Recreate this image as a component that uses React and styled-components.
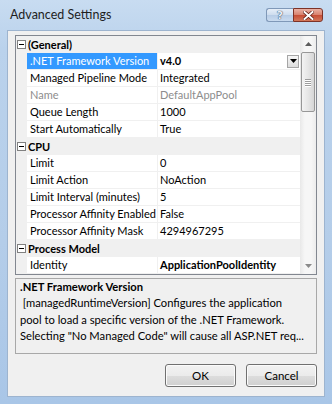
import React from 'react'
import styled, { createGlobalStyle } from 'styled-components'

const sections = [
  {
    name: '(General)',
    rows: [
      { label: '.NET Framework Version', value: 'v4.0', bold: true, selected: true, dropdown: true },
      { label: 'Managed Pipeline Mode', value: 'Integrated' },
      { label: 'Name', value: 'DefaultAppPool', disabled: true },
      { label: 'Queue Length', value: '1000' },
      { label: 'Start Automatically', value: 'True' },
    ],
  },
  {
    name: 'CPU',
    rows: [
      { label: 'Limit', value: '0' },
      { label: 'Limit Action', value: 'NoAction' },
      { label: 'Limit Interval (minutes)', value: '5' },
      { label: 'Processor Affinity Enabled', value: 'False' },
      { label: 'Processor Affinity Mask', value: '4294967295' },
    ],
  },
  {
    name: 'Process Model',
    rows: [{ label: 'Identity', value: 'ApplicationPoolIdentity', bold: true }],
  },
]

const descLines = [
  ' [managedRuntimeVersion] Configures the application',
  'pool to load a specific version of the .NET Framework.',
  'Selecting "No Managed Code" will cause all ASP.NET req...',
]

const App = () => {
  return (
    <>
      <GlobalStyle />
      <Window>
        <TitleBar>
          <Title>Advanced Settings</Title>
          <Caption>
            <HelpButton>?</HelpButton>
            <CloseButton>
              <svg width="11" height="9" viewBox="0 0 11 9">
                <path d="M1.5 1 L9.5 8 M9.5 1 L1.5 8" stroke="#5a1a12" strokeWidth="3.4" strokeLinecap="square" />
                <path d="M1.5 1 L9.5 8 M9.5 1 L1.5 8" stroke="#fff" strokeWidth="2" strokeLinecap="square" />
              </svg>
            </CloseButton>
          </Caption>
        </TitleBar>
        <Client>
          <Grid>
            <Rows>
              {sections.map((s) => (
                <React.Fragment key={s.name}>
                  <Category>
                    <Gutter>
                      <Toggle />
                    </Gutter>
                    <CategoryName>{s.name}</CategoryName>
                  </Category>
                  {s.rows.map((r) => (
                    <Row key={r.label}>
                      <Gutter />
                      <Label $selected={r.selected} $disabled={r.disabled}>
                        {r.label}
                      </Label>
                      <Value $bold={r.bold} $disabled={r.disabled}>
                        <span>{r.value}</span>
                        {r.dropdown && (
                          <DropButton>
                            <svg width="7" height="4" viewBox="0 0 7 4">
                              <path d="M0 0 H7 L3.5 4 Z" fill="#000" />
                            </svg>
                          </DropButton>
                        )}
                      </Value>
                    </Row>
                  ))}
                </React.Fragment>
              ))}
            </Rows>
            <ScrollBar>
              <Arrow>
                <svg width="7" height="4" viewBox="0 0 7 4">
                  <path d="M0 4 H7 L3.5 0 Z" fill="#5c5c5c" />
                </svg>
              </Arrow>
              <Thumb>
                <Grip />
                <Grip />
                <Grip />
                <Grip />
              </Thumb>
              <Track />
              <Arrow>
                <svg width="7" height="4" viewBox="0 0 7 4">
                  <path d="M0 0 H7 L3.5 4 Z" fill="#8a8a8a" />
                </svg>
              </Arrow>
            </ScrollBar>
          </Grid>
          <Description>
            <DescTitle>.NET Framework Version</DescTitle>
            {descLines.map((l) => (
              <DescLine key={l}>{l}</DescLine>
            ))}
          </Description>
          <Buttons>
            <Button>OK</Button>
            <Button>Cancel</Button>
          </Buttons>
        </Client>
      </Window>
    </>
  )
}

const GlobalStyle = createGlobalStyle`
  html, body {
    margin: 0;
    padding: 0;
  }
  body {
    background: #bcd3ed;
    font-family: Lato, "Liberation Sans", sans-serif;
    color: #000;
  }
`

const Window = styled.div`
  width: 332px;
  height: 404px;
  box-sizing: border-box;
  padding: 0 7px 7px 7px;
  display: flex;
  flex-direction: column;
  background: linear-gradient(180deg, #c8dcf1 0%, #bad2ec 12%, #b4cde9 60%, #a9c6e7 100%);
`

const TitleBar = styled.div`
  height: 30px;
  display: flex;
  justify-content: space-between;
  align-items: flex-start;
`

const Title = styled.div`
  padding: 7px 0 0 3px;
  font-size: 12.5px;
  line-height: 16px;
  color: #1e1e1e;
`

const Caption = styled.div`
  display: flex;
  margin: 8px 2px 0 0;
`

const HelpButton = styled.div`
  width: 27px;
  height: 14px;
  box-sizing: border-box;
  border: 1px solid #7f98b8;
  border-right: none;
  border-radius: 3px 0 0 3px;
  background: linear-gradient(180deg, #e6eef8 0%, #cddcee 50%, #b7cce6 51%, #c9dbef 100%);
  display: flex;
  justify-content: center;
  align-items: center;
  font-family: "DejaVu Sans", sans-serif;
  font-weight: bold;
  font-size: 11px;
  color: #e8eef6;
  text-shadow: 0 0 1px #2c4460, 0 0 1px #2c4460;
`

const CloseButton = styled.div`
  width: 30px;
  height: 14px;
  box-sizing: border-box;
  border: 1px solid #7d3227;
  border-radius: 0 3px 3px 0;
  background: linear-gradient(180deg, #eab1a4 0%, #d9836f 48%, #c74d35 52%, #d2775a 100%);
  display: flex;
  justify-content: center;
  align-items: center;
`

const Client = styled.div`
  flex: 1;
  box-sizing: border-box;
  background: #f0f0f0;
  border: 1px solid #9db4cf;
  padding: 4px 7px 0 7px;
  display: flex;
  flex-direction: column;
`

const Grid = styled.div`
  height: 240px;
  box-sizing: border-box;
  border: 1px solid #828790;
  background: #fff;
  display: flex;
  overflow: hidden;
`

const Rows = styled.div`
  flex: 1;
  display: flex;
  flex-direction: column;
  font-size: 11px;
`

const Row = styled.div`
  display: flex;
  height: 17px;
  flex-shrink: 0;
`

const Category = styled(Row)`
  background: #f0f0f0;
  font-weight: bold;
  align-items: center;
`

const Gutter = styled.div`
  width: 11px;
  flex-shrink: 0;
  height: 17px;
  background: #f0f0f0;
  display: flex;
  align-items: center;
  justify-content: flex-end;
`

const Toggle = styled.div`
  position: relative;
  width: 9px;
  height: 9px;
  box-sizing: border-box;
  border: 1px solid #808080;
  background: #fff;
  margin-right: 1px;
  &::after {
    content: '';
    position: absolute;
    left: 1px;
    right: 1px;
    top: 3px;
    height: 1px;
    background: #000;
  }
`

const CategoryName = styled.div`
  padding-left: 1px;
  line-height: 17px;
`

const Label = styled.div`
  width: 131px;
  flex-shrink: 0;
  box-sizing: border-box;
  height: 17px;
  padding-left: 3px;
  line-height: 16px;
  white-space: nowrap;
  overflow: hidden;
  border-bottom: 1px solid #f0f0f0;
  border-right: 1px solid #f0f0f0;
  background: ${(p) => (p.$selected ? '#3399ff' : '#fff')};
  color: ${(p) => (p.$selected ? '#fff' : p.$disabled ? '#8d8d8d' : '#000')};
`

const Value = styled.div`
  flex: 1;
  min-width: 0;
  box-sizing: border-box;
  height: 17px;
  padding: 0 1px 0 2px;
  line-height: 16px;
  border-bottom: 1px solid #f0f0f0;
  display: flex;
  align-items: center;
  justify-content: space-between;
  white-space: nowrap;
  font-weight: ${(p) => (p.$bold ? 'bold' : 'normal')};
  color: ${(p) => (p.$disabled ? '#8d8d8d' : '#000')};
`

const DropButton = styled.div`
  width: 12px;
  height: 13px;
  box-sizing: border-box;
  border: 1px solid #a5a5a5;
  background: linear-gradient(180deg, #f7f7f7, #dcdcdc);
  display: flex;
  align-items: center;
  justify-content: center;
`

const ScrollBar = styled.div`
  width: 16px;
  flex-shrink: 0;
  display: flex;
  flex-direction: column;
  background: linear-gradient(90deg, #e8e8e8, #f6f6f6 30%, #f6f6f6 70%, #ececec);
`

const Arrow = styled.div`
  height: 16px;
  flex-shrink: 0;
  display: flex;
  align-items: center;
  justify-content: center;
`

const Thumb = styled.div`
  height: 60px;
  margin: 0 1px;
  flex-shrink: 0;
  box-sizing: border-box;
  border: 1px solid #979797;
  border-radius: 2px;
  background: linear-gradient(90deg, #f3f3f3, #e6e6e6 50%, #d6d6d6);
  display: flex;
  flex-direction: column;
  align-items: center;
  justify-content: center;
  gap: 1px;
`

const Grip = styled.div`
  width: 6px;
  height: 1px;
  background: #9c9c9c;
  box-shadow: 0 1px 0 #fff;
`

const Track = styled.div`
  flex: 1;
`

const Description = styled.div`
  height: 76px;
  margin-top: 3px;
  box-sizing: border-box;
  border: 1px solid #a8a8a8;
  background: #f0f0f0;
  padding: 0 4px;
  font-size: 11.2px;
  line-height: 16.5px;
`

const DescTitle = styled.div`
  font-weight: bold;
  line-height: 14px;
  padding-top: 1px;
  margin-bottom: 1px;
`

const DescLine = styled.div`
  white-space: pre;
`

const Buttons = styled.div`
  display: flex;
  justify-content: flex-end;
  gap: 10px;
  margin-top: 10px;
`

const Button = styled.div`
  width: 71px;
  height: 23px;
  box-sizing: border-box;
  border: 1px solid #707070;
  border-radius: 3px;
  background: linear-gradient(180deg, #f2f2f2 0%, #ebebeb 50%, #dddddd 51%, #cfcfcf 100%);
  box-shadow: inset 0 0 0 1px #fbfbfb;
  display: flex;
  align-items: center;
  justify-content: center;
  font-size: 11.5px;
  color: #000;
`

export default App
